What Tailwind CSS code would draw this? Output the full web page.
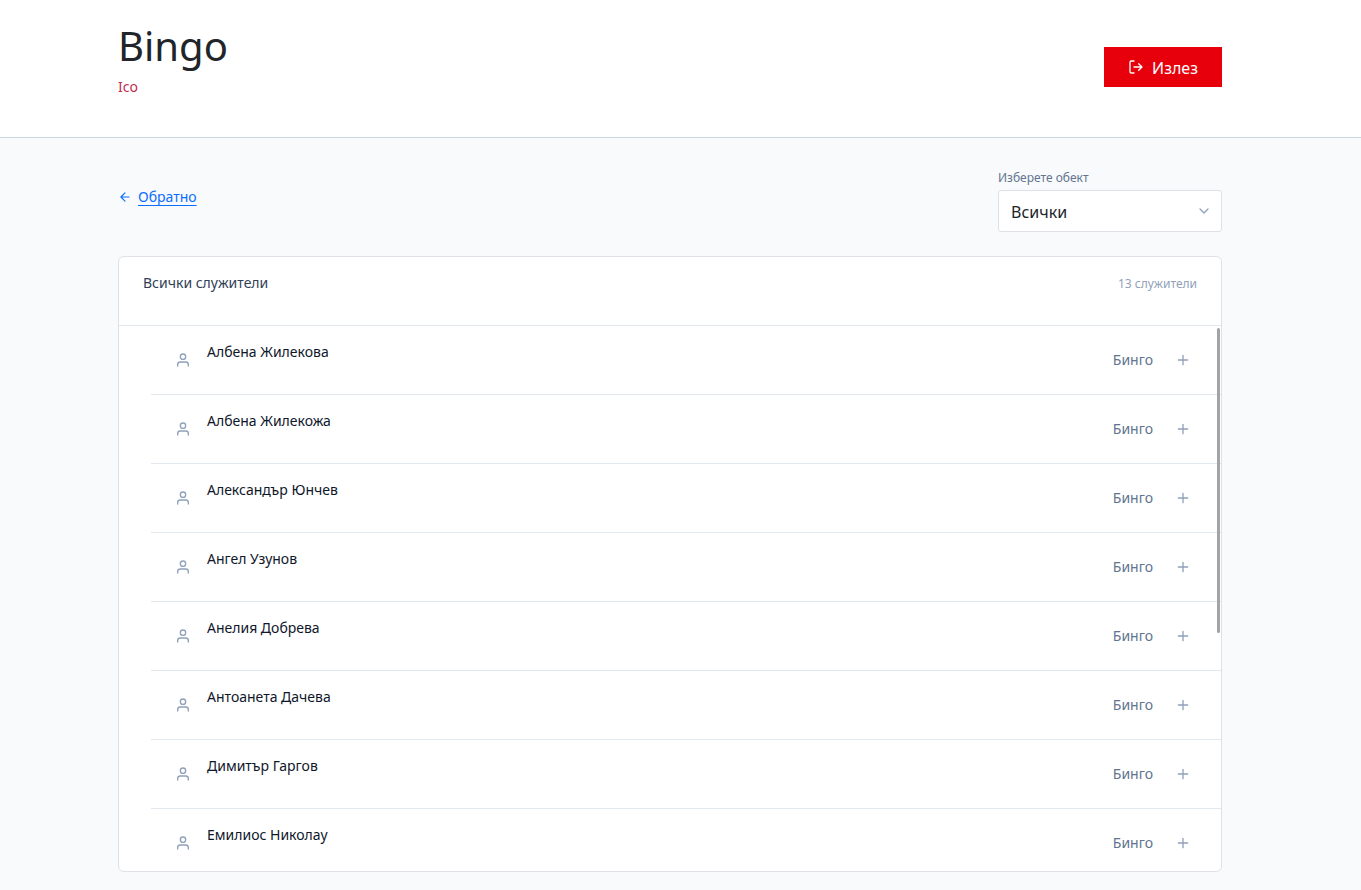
<!DOCTYPE html>
<html lang="bg">
<head>
  <meta charset="UTF-8">
  <meta name="viewport" content="width=device-width, initial-scale=1.0">
  <title>Bingo</title>
  <script src="https://cdn.jsdelivr.net/npm/@tailwindcss/browser@4"></script>
</head>
<body class="flex h-screen flex-col bg-slate-50 font-['Noto_Sans',sans-serif] text-[#212529]">
  <!-- Header -->
  <header class="border-b border-slate-300 bg-white pr-[21px]">
    <div class="mx-auto flex max-w-6xl items-start justify-between px-6 pt-[22px] pb-10">
      <div>
        <h1 class="text-[40px] leading-[48px]">Bingo</h1>
        <p class="mt-1.5 text-sm leading-[21px] text-[#be2f4f]">Ico</p>
      </div>
      <button type="button" class="mt-[25px] flex h-10 items-center gap-2 bg-[#e7000b] px-6 text-base text-white hover:bg-red-700">
        <svg class="size-4" fill="none" stroke="currentColor" stroke-width="2" stroke-linecap="round" stroke-linejoin="round" viewBox="0 0 24 24">
          <path d="M9 21H5a2 2 0 0 1-2-2V5a2 2 0 0 1 2-2h4M16 17l5-5-5-5M21 12H9"></path>
        </svg>
        <span class="pt-0.5">Излез</span>
      </button>
    </div>
  </header>

  <main class="flex min-h-0 flex-1 flex-col pr-[21px]">
    <div class="mx-auto flex min-h-0 w-full max-w-6xl flex-1 flex-col px-6 pt-7 pb-[18px]">
      <!-- Back link and location filter -->
      <div class="flex items-center justify-between">
        <a href="/" class="mb-1 flex items-center gap-1.5 text-sm text-[#0d6efd]">
          <svg class="size-3.5" fill="none" stroke="currentColor" stroke-width="2" stroke-linecap="round" stroke-linejoin="round" viewBox="0 0 24 24">
            <path d="M19 12H5M12 19l-7-7 7-7"></path>
          </svg>
          <span class="underline underline-offset-3">Обратно</span>
        </a>
        <div class="w-56">
          <label for="location" class="mb-0.5 block pt-0.5 text-xs leading-5 text-slate-500">Изберете обект</label>
          <div class="relative">
            <select id="location" class="h-[42px] w-full appearance-none rounded-[3px] border border-[#dee2e6] bg-white px-3 pt-0.5 text-base">
              <option>Всички</option>
            </select>
            <svg class="pointer-events-none absolute top-[13px] right-2.5 size-4 text-slate-400" fill="none" stroke="currentColor" stroke-width="2" stroke-linecap="round" stroke-linejoin="round" viewBox="0 0 24 24">
              <path d="M6 9l6 6 6-6"></path>
            </svg>
          </div>
        </div>
      </div>

      <!-- Employees -->
      <section class="relative mt-6 flex min-h-0 flex-1 flex-col overflow-hidden rounded-md border border-[#dee2e6] bg-white">
        <div class="flex items-start justify-between border-b border-slate-200 px-6 pt-4 pb-[30px]">
          <h2 class="text-sm text-slate-700">Всички служители</h2>
          <span class="text-xs leading-[22px] text-slate-400">13 служители</span>
        </div>
        <ul id="employees" class="min-h-0 flex-1 divide-y divide-slate-200 overflow-y-auto pl-8 [scrollbar-width:none]"></ul>
        <div class="absolute top-[71px] right-px h-[305px] w-[3px] rounded-sm bg-[#a3a3a3]"></div>
      </section>
    </div>
  </main>

  <script>
    const employees = [
      'Албена Жилекова',
      'Албена Жилекожа',
      'Александър Юнчев',
      'Ангел Узунов',
      'Анелия Добрева',
      'Антоанета Дачева',
      'Димитър Гаргов',
      'Емилиос Николау'
    ];

    const list = document.getElementById('employees');
    employees.forEach(name => {
      const row = document.createElement('li');
      row.className = 'box-content flex h-[68px] items-center px-6';
      row.innerHTML = `
        <svg class="size-4 shrink-0 text-slate-400" fill="none" stroke="currentColor" stroke-width="2" stroke-linecap="round" stroke-linejoin="round" viewBox="0 0 24 24">
          <path d="M20 21v-2a4 4 0 0 0-4-4H8a4 4 0 0 0-4 4v2"></path>
          <circle cx="12" cy="7" r="4"></circle>
        </svg>
        <p class="mb-4 ml-4 flex-1 text-sm text-slate-900">${name}</p>
        <button type="button" class="text-sm text-slate-500">Бинго</button>
        <button type="button" class="ml-4 p-1.5 text-slate-400" aria-label="+">
          <svg class="size-4" fill="none" stroke="currentColor" stroke-width="2" stroke-linecap="round" stroke-linejoin="round" viewBox="0 0 24 24">
            <path d="M12 5v14M5 12h14"></path>
          </svg>
        </button>
      `;
      list.appendChild(row);
    });
  </script>
</body>
</html>
